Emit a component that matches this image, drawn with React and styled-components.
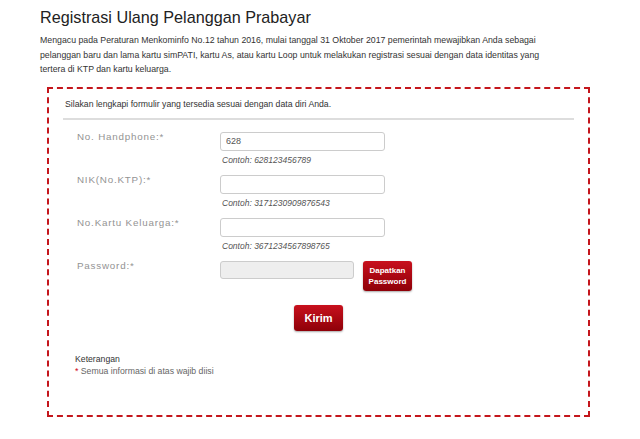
import styled, { createGlobalStyle } from "styled-components";

const GlobalStyle = createGlobalStyle`
  body {
    margin: 0;
    background: #ffffff;
    font-family: "Liberation Sans", Arial, sans-serif;
    color: #333333;
  }
`;

const Page = styled.div`
  width: 550px;
  padding: 7px 0 0 40px;
`;

const Title = styled.h2`
  margin: 0;
  font-size: 16.2px;
  line-height: 20px;
  font-weight: normal;
  color: #222222;
`;

const Intro = styled.p`
  margin: 6px 0 0;
  max-width: 514px;
  font-size: 8.75px;
  line-height: 14.5px;
  color: #333333;
`;

const FormBox = styled.div`
  margin: 10px 0 0 7px;
  border: 2px dashed #c4161c;
  padding: 8px 14px 37px;
`;

const Instruction = styled.p`
  margin: 0;
  padding-left: 2px;
  font-size: 8.7px;
  line-height: 14px;
  color: #333333;
`;

const Divider = styled.hr`
  margin: 7px 0 12px;
  border: 0;
  border-top: 2px solid #dddddd;
`;

const FieldRow = styled.div`
  display: grid;
  grid-template-columns: 143px 1fr;
  padding-left: 14px;
  margin-bottom: 9px;
`;

const Label = styled.label`
  font-size: 9.8px;
  line-height: 10px;
  letter-spacing: 0.8px;
  color: #939393;
`;

const Field = styled.div`
  display: flex;
  flex-direction: column;
`;

const InputLine = styled.div`
  display: flex;
  align-items: flex-start;
  gap: 9px;
`;

const Input = styled.input`
  box-sizing: border-box;
  width: ${(p) => (p.$short ? "134px" : "165px")};
  height: ${(p) => (p.$short ? "18px" : "19px")};
  padding: 0 5px;
  border: 1px solid #cccccc;
  border-radius: 3px;
  background: ${(p) => (p.disabled ? "#eeeeee" : "#ffffff")};
  font-family: "Liberation Sans", Arial, sans-serif;
  font-size: 9px;
  color: #555555;
  outline: none;
`;

const Hint = styled.span`
  margin: 3px 0 0 2px;
  font-size: 8.5px;
  line-height: 12px;
  font-style: italic;
  color: #555555;
`;

const RedButton = styled.button`
  box-sizing: border-box;
  border: 0;
  border-radius: 3px;
  background: linear-gradient(#c8101d, #8e0008);
  box-shadow: 0 1px 2px rgba(0, 0, 0, 0.35);
  color: #ffffff;
  font-family: "Liberation Sans", Arial, sans-serif;
  font-weight: bold;
  padding: 0;
  cursor: pointer;
`;

const SmallButton = styled(RedButton)`
  width: 49px;
  height: 30px;
  font-size: 8px;
  line-height: 11px;
`;

const SubmitRow = styled.div`
  display: flex;
  justify-content: center;
  margin-top: 14px;
`;

const SubmitButton = styled(RedButton)`
  width: 49px;
  height: 26px;
  font-size: 11px;
`;

const Notes = styled.div`
  margin-top: 22px;
  padding-left: 12px;
  font-size: 8.7px;
  line-height: 12.5px;
`;

const NoteTitle = styled.div`
  color: #333333;
`;

const NoteText = styled.div`
  color: #666666;
`;

const Star = styled.span`
  color: #d0021b;
`;

const fields = [
  { label: "No. Handphone:*", value: "628", hint: "Contoh: 628123456789" },
  { label: "NIK(No.KTP):*", value: "", hint: "Contoh: 3171230909876543" },
  { label: "No.Kartu Keluarga:*", value: "", hint: "Contoh: 3671234567898765" },
];

export default function App() {
  return (
    <>
      <GlobalStyle />
      <Page>
        <Title>Registrasi Ulang Pelanggan Prabayar</Title>
        <Intro>
          Mengacu pada Peraturan Menkominfo No.12 tahun 2016, mulai tanggal 31
          Oktober 2017 pemerintah mewajibkan Anda sebagai pelanggan baru dan
          lama kartu simPATI, kartu As, atau kartu Loop untuk melakukan
          registrasi sesuai dengan data identitas yang tertera di KTP dan kartu
          keluarga.
        </Intro>

        <FormBox>
          <Instruction>
            Silakan lengkapi formulir yang tersedia sesuai dengan data diri Anda.
          </Instruction>
          <Divider />

          {fields.map((f) => (
            <FieldRow key={f.label}>
              <Label>{f.label}</Label>
              <Field>
                <Input defaultValue={f.value} />
                <Hint>{f.hint}</Hint>
              </Field>
            </FieldRow>
          ))}

          <FieldRow>
            <Label>Password:*</Label>
            <InputLine>
              <Input $short disabled />
              <SmallButton>
                Dapatkan
                <br />
                Password
              </SmallButton>
            </InputLine>
          </FieldRow>

          <SubmitRow>
            <SubmitButton>Kirim</SubmitButton>
          </SubmitRow>

          <Notes>
            <NoteTitle>Keterangan</NoteTitle>
            <NoteText>
              <Star>*</Star> Semua informasi di atas wajib diisi
            </NoteText>
          </Notes>
        </FormBox>
      </Page>
    </>
  );
}
